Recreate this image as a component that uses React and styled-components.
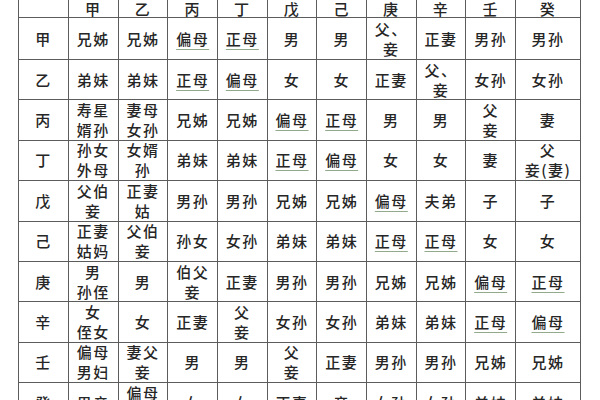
import React from "react";
import styled, { createGlobalStyle } from "styled-components";

const Global = createGlobalStyle`
  html, body { margin: 0; padding: 0; background: #fff; }
  body { font-family: "Noto Sans CJK SC", "Noto Sans", sans-serif; overflow: hidden; }
`;

const Page = styled.div`
  width: 600px;
  height: 400px;
  overflow: hidden;
  background: #fff;
  padding-left: 18px;
  box-sizing: border-box;
`;

const Table = styled.div`
  display: grid;
  width: 563px;
  margin-top: -1px;
  grid-template-columns: 50px repeat(9, 1fr) 65px;
  grid-template-rows: 18px 42px repeat(9, 40.4px);
  border-top: 1px solid #5c5c5c;
  border-left: 1px solid #5c5c5c;
  box-sizing: border-box;
`;

const Cell = styled.div`
  box-sizing: border-box;
  border-right: 1px solid #5c5c5c;
  border-bottom: 1px solid #5c5c5c;
  display: flex;
  flex-direction: column;
  align-items: center;
  justify-content: center;
  color: #262626;
  font-size: 15px;
  font-weight: 500;
  line-height: ${(p) => (p.$header ? "17px" : "20px")};
  letter-spacing: 1.5px;
  text-align: center;
  white-space: nowrap;
`;

const Line = styled.span`
  display: block;
  text-decoration: ${(p) => (p.$mark ? "underline" : "none")};
  text-decoration-color: #93a98c;
  text-decoration-thickness: 1px;
  text-underline-offset: 4px;
`;

const header = ["", "甲", "乙", "丙", "丁", "戊", "己", "庚", "辛", "壬", "癸"];

const rows = [
  ["甲", "兄姊", "兄姊", "偏母", "正母", "男", "男", "父、|妾", "正妻", "男孙", "男孙"],
  ["乙", "弟妹", "弟妹", "正母", "偏母", "女", "女", "正妻", "父、|妾", "女孙", "女孙"],
  ["丙", "寿星|婿孙", "妻母|女孙", "兄姊", "兄姊", "偏母", "正母", "男", "男", "父|妾", "妻"],
  ["丁", "孙女|外母", "女婿|孙", "弟妹", "弟妹", "正母", "偏母", "女", "女", "妻", "父|妾(妻)"],
  ["戊", "父伯|妾", "正妻|姑", "男孙", "男孙", "兄姊", "兄姊", "偏母", "夫弟", "子", "子"],
  ["己", "正妻|姑妈", "父伯|妾", "孙女", "女孙", "弟妹", "弟妹", "正母", "正母", "女", "女"],
  ["庚", "男|孙侄", "男", "伯父|妾", "正妻", "男孙", "男孙", "兄姊", "兄姊", "偏母", "正母"],
  ["辛", "女|侄女", "女", "正妻", "父|妾", "女孙", "女孙", "弟妹", "弟妹", "正母", "偏母"],
  ["壬", "偏母!|男妇", "妻父|妾", "男", "男", "父|妾", "正妻", "男孙", "男孙", "兄姊", "兄姊"],
  ["癸", "男亲", "偏母!|妾", "女", "女", "正妻", "妾", "女孙", "女孙", "弟妹", "弟妹"],
];

const marked = (t) => t === "偏母" || t === "正母";

function Content({ text }) {
  return text.split("|").map((part, i) => {
    const plain = part.endsWith("!");
    const t = plain ? part.slice(0, -1) : part;
    return (
      <Line key={i} $mark={!plain && marked(t)}>
        {t}
      </Line>
    );
  });
}

export default function App() {
  return (
    <Page>
      <Global />
      <Table>
        {header.map((h, i) => (
          <Cell key={"h" + i} $header>
            {h}
          </Cell>
        ))}
        {rows.map((r, ri) =>
          r.map((c, ci) => (
            <Cell key={ri + "-" + ci}>
              <Content text={c} />
            </Cell>
          ))
        )}
      </Table>
    </Page>
  );
}
